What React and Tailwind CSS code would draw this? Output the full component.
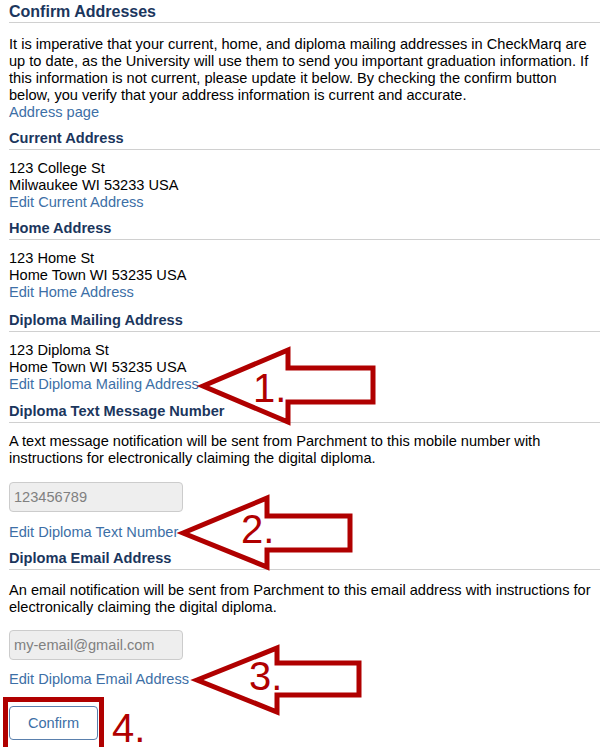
import React from "react";

const font = { fontFamily: '"Liberation Sans", Arial, sans-serif' };

function SectionHeading({ children, className = "mt-[9px]" }) {
  return (
    <h3 className={`border-b border-[#d0d0d0] pb-[2px] text-[14.6px] font-bold leading-[17px] text-[#1b365d] ${className}`}>
      {children}
    </h3>
  );
}

function EditLink({ children, className = "" }) {
  return (
    <a href="#" className={`block text-[#3d6fa6] ${className}`}>
      {children}
    </a>
  );
}

function AddressBlock({ title, lines, link, gap }) {
  return (
    <section>
      <SectionHeading className={gap}>{title}</SectionHeading>
      <div className="mt-[10px]">
        {lines.map((l) => (
          <p key={l}>{l}</p>
        ))}
        <EditLink>{link}</EditLink>
      </div>
    </section>
  );
}

function ReadOnlyInput({ value, className }) {
  return (
    <div className={`flex h-[30px] w-[174px] items-center rounded-[4px] border border-[#cccccc] bg-[#eeeeee] px-[4px] text-[#808080] ${className}`}>
      {value}
    </div>
  );
}

// red annotation arrows pointing left
function Arrow({ tipX, tipY, headX, headTop, headBottom, bodyTop, bodyBottom, bodyRight }) {
  const pts = [
    [tipX, tipY],
    [headX, headTop],
    [headX, bodyTop],
    [bodyRight, bodyTop],
    [bodyRight, bodyBottom],
    [headX, bodyBottom],
    [headX, headBottom],
  ]
    .map((p) => p.join(","))
    .join(" ");
  return <polygon points={pts} fill="white" stroke="#b00000" strokeWidth="5" strokeLinejoin="miter" />;
}

export default function App() {
  return (
    <div className="relative h-[747px] w-[606px] overflow-hidden bg-white" style={font}>
      <div className="pl-[9px] pr-[6px] text-[14.6px] leading-[17px] text-black">
        <h2 className="border-b border-[#d0d0d0] pt-[2px] text-[16px] font-bold leading-[20px] text-[#1b365d]">
          Confirm Addresses
        </h2>

        <div className="mt-[13px]">
          <p>
            It is imperative that your current, home, and diploma mailing addresses in CheckMarq are
            up to date, as the University will use them to send you important graduation information. If
            this information is not current, please update it below. By checking the confirm button
            below, you verify that your address information is current and accurate.
          </p>
          <EditLink>Address page</EditLink>
        </div>

        <AddressBlock
          title="Current Address"
          lines={["123 College St", "Milwaukee WI 53233 USA"]}
          link="Edit Current Address"
          gap="mt-[9px]"
        />
        <AddressBlock
          title="Home Address"
          lines={["123 Home St", "Home Town WI 53235 USA"]}
          link="Edit Home Address"
          gap="mt-[9px]"
        />
        <AddressBlock
          title="Diploma Mailing Address"
          lines={["123 Diploma St", "Home Town WI 53235 USA"]}
          link="Edit Diploma Mailing Address"
          gap="mt-[11px]"
        />

        <section>
          <SectionHeading className="mt-[10px]">Diploma Text Message Number</SectionHeading>
          <p className="mt-[10px]">
            A text message notification will be sent from Parchment to this mobile number with
            instructions for electronically claiming the digital diploma.
          </p>
          <ReadOnlyInput value="123456789" className="mt-[15px]" />
          <EditLink className="mt-[12px]">Edit Diploma Text Number</EditLink>
        </section>

        <section>
          <SectionHeading className="mt-[9px]">Diploma Email Address</SectionHeading>
          <p className="mt-[12px]">
            An email notification will be sent from Parchment to this email address with instructions for
            electronically claiming the digital diploma.
          </p>
          <ReadOnlyInput value="my-email@gmail.com" className="mt-[14px]" />
          <EditLink className="mt-[11px]">Edit Diploma Email Address</EditLink>
        </section>

        <button className="mt-[18px] h-[34px] w-[89px] rounded-[4px] border border-[#5a80ad] bg-white text-[#3d6fa6]">
          Confirm
        </button>
      </div>

      {/* annotation overlay */}
      <svg className="pointer-events-none absolute left-0 top-0" width="606" height="747">
        <Arrow tipX={203} tipY={386} headX={288} headTop={350} headBottom={422} bodyTop={368} bodyBottom={402} bodyRight={373} />
        <Arrow tipX={183} tipY={533} headX={267} headTop={498} headBottom={567} bodyTop={516} bodyBottom={550} bodyRight={350} />
        <Arrow tipX={197} tipY={680} headX={277} headTop={648} headBottom={712} bodyTop={663} bodyBottom={695} bodyRight={359} />
        <g fill="#b00000" fontSize="40" style={font}>
          <text x="253" y="402">1.</text>
          <text x="241" y="543">2.</text>
          <text x="249" y="690">3.</text>
          <text x="112" y="742">4.</text>
        </g>
      </svg>
      <div className="pointer-events-none absolute left-[3px] top-[697px] h-[70px] w-[101px] border-[5px] border-[#b00000]" />
    </div>
  );
}
